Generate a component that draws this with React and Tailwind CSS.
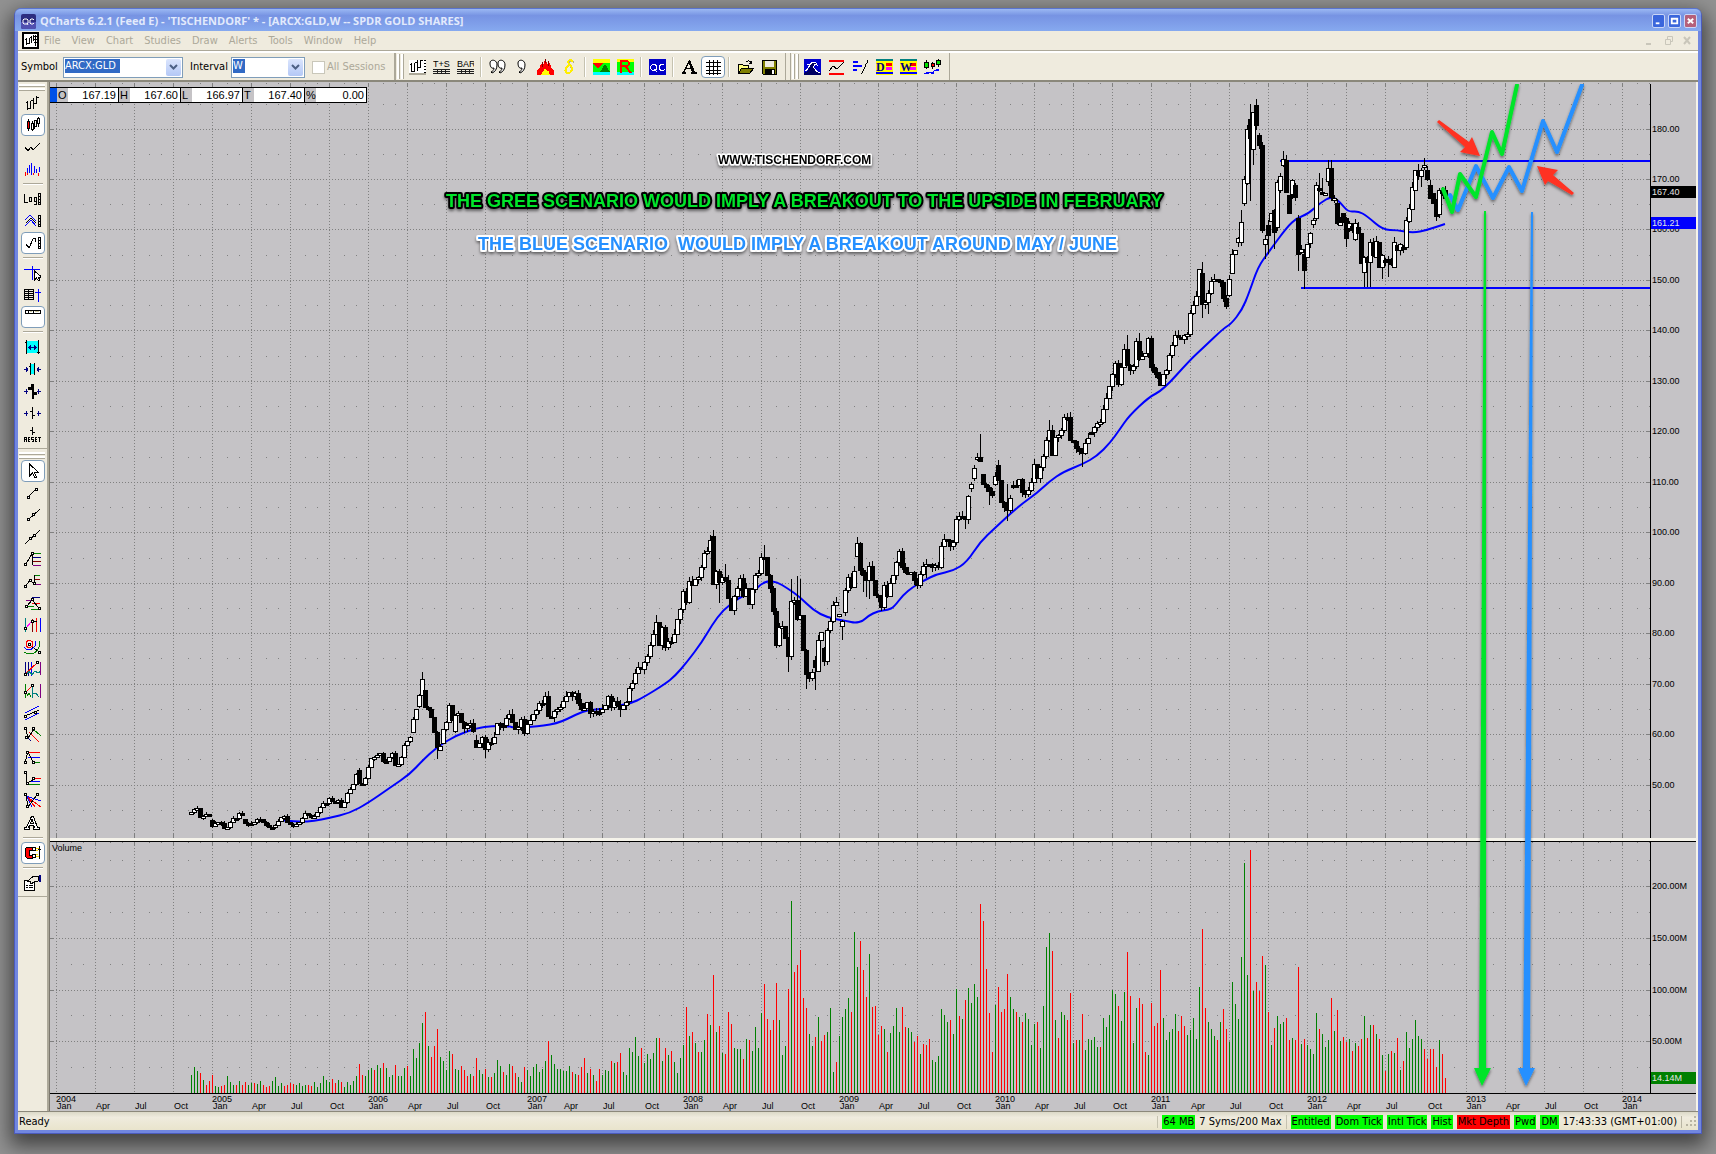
import { clsx } from 'clsx';

const GREEN = '#008000';
const RED = '#ff0000';
const NAVY = '#000080';
const BLUE = '#0000ff';
const TEAL = '#008080';
const PURPLE = '#800080';
const MAROON = '#800000';

// weekly closes as chart y; a pair is [open, close] where the week gapped
const CLOSES = [
  812, 809, 808, 817, 816, 814, 816, [820, 826], 823, 822, 823, 828, 827, 822, 818, 818, 813, 815, [819, 823], 823,
  823, 822, 819, 819, 822, 825, 827, 827, 825, 821, 817, 816, 822, 824, 825, 824, 822, 818, 813, 815,
  817, 816, 812, 807, 803, 803, 798, 801, 802, 800, 807, 802, 793, 789, 784, 774, [770, 783], 784, 778, 767,
  758, 757, 755, 753, 761, 761, 757, 753, 765, 764, 757, 745, 741, 737, [732, 719], 709, [706, 695], 679, [690, 707], 709,
  717, 732, 747, [750, 746], [743, 729], 722, 705, 720, [731, 715], 713, 722, 728, 725, 723, 731, [740, 747], 743, 737, 749, 742,
  743, 737, [734, 723], 725, 725, 718, 714, 722, 729, 727, 719, 733, 724, 720, 714, 710, 703, 703, 696, 716,
  717, 711, 709, 707, 701, 696, 692, 696, 693, 703, 709, 708, 702, 713, 711, 712, 712, 709, 705, 696,
  707, 701, 705, 709, 705, 702, [701, 688], 683, 673, 667, 669, 662, 656, 645,
  634, 622, 645, 627, 647, 641, 642, 634, 619, 609, 591, 602, 581, 585, 579, 577,
  567, 553, 551, 540, [536, 584], 571, 582, 577, 580, 598, 610, 596, 588, 578, 596, 588, 604, 589, 575, 573,
  557, 557, 575, 588, 611, 645, 627, 626, 638, 656, 601, 600, 619, 615, 650, 674, 678, 672, [660, 667], [671, 640],
  632, [648, 661], 630, 621, 605, 602, [615, 614], [626, 621], [612, 590], 577, 587, 571, [556, 543], 570, 575, 580, 566, 580, 595, 597,
  607, 585, 596, 583, 575, 562, 551, 567, 572, 573, 572, 580, 585, 574, 566, 564, 564, 567, 565, 567,
  546, 539, 540, 546, 542, 519, 516, 516, 519, 496, [488, 484], [478, 468], [458, 457], 461, [474, 484], 487, 491, 495, [484, 476], [465, 480],
  502, 507, 510, 498, [485, 485], 485, 479, 492, 494, 490, 482, 464, 478, 467, 456, 440, 430, 455, 437, 435,
  430, 417, 417, 440, 441, 448, 451, 453, 443, 438, [432, 432], 427, 423, 422, 409, 398, 386, 374,
  363, 384, 367, 349, 365, 370, 366, 341, 359, 356, 353, 338, 367, 372, 377, 385, 374, 370, 355, 345,
  335, 337, 339, 335, 334, 313, 305, 296, 269,
  [273, 304], 302, 293, 281, 279, 280, 282, 298, 306, [295, 279], [273, 254], 250, [242, 238], [242, 222],
  [203, 179], [183, 129], [119, 138], [149, 112], [105, 125], [135, 145], [145, 230], [244, 239], [225, 235], [221, 213],
  [210, 232], [227, 182], [190, 176], [165, 159], [160, 192], [195, 213], [194, 180], [185, 197], [218, 254], [252, 249],
  [254, 270], [257, 244], [243, 233], [224, 220], [218, 185], [188, 190], [192, 194], [194, 193], [181, 168], [168, 197],
  [200, 198], [203, 223], [225, 222], [213, 222], [218, 238], [228, 223], [226, 230], [239, 223], [227, 233], [233, 263],
  [272, 257], [258, 262], [262, 242], [242, 255], [257, 241], [242, 267], [267, 255], [260, 261], [259, 260], [262, 264],
  [267, 242], [245, 250], [250, 244], [247, 248], [247, 220], [221, 208], [209, 187], [190, 170], [170, 175], [176, 170],
  [166, 165], [170, 179], [185, 198], [193, 203], [200, 216], [214, 190], [190, 193], [190, 198],
];

// long shadows, [high, low] by week
const WICKS = {
  77: [672], 82: [0, 759], 98: [0, 758], 143: [0, 717], 155: [615], 174: [530], 176: [0, 603], 178: [564], 191: [545],
  199: [0, 672], 200: [579], 202: [576], 203: [579], 205: [0, 689], 208: [0, 690], 217: [0, 640], 222: [537],
  224: [0, 592], 225: [0, 597], 226: [0, 599], 245: [0, 578], 258: [0, 529], 263: [434], 266: [0, 505], 272: [484, 521],
  286: [420], 297: [0, 467], 312: [335], 316: [333], 337: [262, 318], 338: [0, 309], 339: [0, 314], 350: [210],
  352: [0, 185], 353: [104, 201], 354: [0, 165], 355: [99], 358: [0, 259], 359: [0, 254], 361: [0, 249], 364: [151],
  369: [0, 271], 371: [0, 289], 376: [173], 377: [178], 379: [160], 380: [160], 385: [0, 247], 391: [0, 287],
  392: [0, 287], 393: [0, 287], 397: [0, 279], 399: [0, 277], 409: [164], 410: [0, 187], 411: [158],
};

// weekly volume in pixels, negative for a down week
const VOLUMES = [
  18, 26, 22, -20, 13, -8, -12, -18, 7, 6, -7, -8, 17, 11, 8, -8, 12, -8, -11, 8, 10, -10, 9, 12, -8, -6, -7, 12, 16, 7,
  10, -7, -8, -10, -9, 8, 10, 7, 8, -8, -7, 11, 6, 10, 17, 13, 11, -14, -10, 13, -11, 6, 11, 8, 12, 17, -29, -18, 17, 23,
  25, -23, 28, 25, -30, 25, 16, 18, -28, 17, 17, 25, -27, 17, 44, 35, 50, 70, -81, 47, -36, -47, -64, 36, 32, 23, 42, -39, 24, 23,
  -27, -23, -17, 19, -17, -35, 23, 19, -24, 16, -16, 20, 33, 27, -21, 18, 29, -27, -20, 16, 11, -26, 23, 17, 26, 29, 21, 24, 32, -52,
  38, 29, 24, 24, 22, 22, 27, -21, 19, -18, -26, -35, 20, -24, 18, -12, -24, 18, 23, 22, -32, 30, -31, -40, 21, 18, 45, 41, 56, 37,
  -45, 30, 39, 34, 40, 55, -55, 32, -45, 38, -42, 31, 20, 35, 48, -86, 57, -61, 50, -41, 41, 53, -79, 68, -118, 61, -67, 40, -39, -81,
  -69, 45, 44, 44, -34, 54, -53, 42, 66, 45, 80, -109, -74, -63, -73, -110, 73, 38, 47, -104, 192, -121, -128, -143, -95, -85, 59, 47, -56, 76,
  -52, -58, 61, 85, 21, -31, 57, 76, 84, 95, -81, 161, 126, -152, -123, -96, 139, -86, -87, -58, -67, 64, -41, 60, 67, 85, 61, -86, -66, 65,
  61, -51, -57, 39, -49, -48, -54, 33, 31, 37, 84, 78, 71, -73, 59, 104, -77, 74, -93, 105, 90, 109, 96, -189, -172, -124, -80, -41, 88, -106,
  -81, -84, -119, 96, 84, -81, 76, -71, 80, 74, 48, 69, -71, 45, 87, 146, 160, -142, 73, -55, 81, 78, -73, -100, 50, -53, 53, -79, 43, 54,
  53, 56, 46, -46, 75, 66, 78, 103, 99, -87, 72, 101, -141, -97, 50, 85, -95, -89, -41, 38, -90, -67, -70, -123, 75, 53, 61, 64, 79, -62,
  -77, -67, 58, 63, 75, 54, 106, -164, -85, 71, 64, 57, -53, 71, -84, -64, 51, 111, 89, 74, 136, 230, 118, -243, 102, -111, -102, -137, 128, -81,
  48, -65, 77, 69, 71, -75, -53, 55, -53, -126, 49, -54, 48, 44, 39, 80, -64, 59, 46, 53, -95, 62, -83, 52, -56, -51, 54, -42, 50, -47,
  -54, 77, -55, 68, -68, 59, -54, 38, -22, 39, -42, 40, -55, 23, -32, 61, 45, 54, 73, 57, 54, -44, -34, -44, -44, -26, 53, -39, -15,
];

const AVERAGE = [
  [280, 820], [300, 822], [314, 821], [329, 818], [350, 813], [368, 803], [391, 787], [410, 774], [422, 761], [437, 747],
  [457, 735], [477, 728], [492, 726], [508, 726], [515, 728], [530, 727], [557, 724], [577, 714], [588, 710], [603, 709],
  [613, 706], [630, 704], [644, 697], [665, 684], [675, 676], [687, 662], [702, 642], [712, 625], [723, 610], [740, 597],
  [753, 592], [761, 584], [768, 581], [777, 582], [787, 588], [800, 597], [813, 610], [828, 618], [847, 621], [855, 623],
  [863, 621], [868, 616], [878, 611], [888, 610], [894, 607], [903, 595], [913, 587], [923, 581], [937, 574], [953, 571],
  [967, 562], [980, 542], [995, 528], [1010, 514], [1023, 503], [1037, 493], [1050, 481], [1063, 472], [1083, 464], [1097, 456],
  [1110, 443], [1120, 429], [1129, 416], [1149, 397], [1163, 390], [1190, 360], [1204, 347], [1224, 328], [1231, 324], [1242, 310],
  [1249, 293], [1258, 267], [1268, 253], [1287, 227], [1297, 218], [1308, 214], [1320, 203], [1332, 196], [1340, 202], [1348, 212],
  [1358, 211], [1367, 216], [1383, 230], [1397, 230], [1413, 233], [1427, 230], [1445, 224],
];

// rounds the corners by running each curve between segment midpoints
const smooth = (points) => {
  const [first, ...rest] = points;
  let d = `M${first[0]} ${first[1]}`;
  rest.slice(0, -1).forEach(([x, y], i) => {
    const [nx, ny] = rest[i + 1];
    d += `Q${x} ${y} ${(x + nx) / 2} ${(y + ny) / 2}`;
  });
  const [lx, ly] = points[points.length - 1];
  return `${d}L${lx} ${ly}`;
};

const QUARTERS = [
  56, 95, 134, 173, 212, 251, 290, 329, 368, 407, 446, 485, 527, 563, 602, 644, 683, 722, 761, 800, 839, 878, 917, 956,
  995, 1034, 1073, 1112, 1151, 1190, 1229, 1268, 1307, 1346, 1385, 1427, 1466, 1505, 1544, 1583, 1622,
];
const MONTHS = ['Jan', 'Apr', 'Jul', 'Oct'];

const PRICE_ROWS = [129, 179, 229, 280, 330, 381, 431, 482, 532, 583, 633, 684, 734, 785];
const PRICES = PRICE_ROWS.map((y, i) => ({ price: 180 - i * 10, y }));
const VOLUME_LEVELS = [
  { label: '200.00M', y: 886 },
  { label: '150.00M', y: 938 },
  { label: '100.00M', y: 990 },
  { label: '50.00M', y: 1041 },
];

const weekX = (i) => 191 + i * 3;

const Grid = () => {
  const rows = [...PRICES.map((p) => p.y), ...VOLUME_LEVELS.map((v) => v.y)];
  const minorRows = [104, 154, 204, 255, 305, 356, 406, 457, 507, 558, 608, 658, 709, 759, 810, 860, 912, 964, 1015, 1067];
  return (
    <g stroke="#808080" shapeRendering="crispEdges">
      {QUARTERS.map((x) => (
        <g key={x}>
          <path d={`M${x + 0.5} 83V838M${x + 0.5} 842V1093`} strokeDasharray="1 2" />
          <path d={`M${x + 0.5} 83v4M${x + 0.5} 834v4M${x + 0.5} 842v3M${x + 15.5} 83v1M${x + 27.5} 83v1M${x + 15.5} 842v1M${x + 27.5} 842v1`} />
        </g>
      ))}
      {rows.map((y) => (
        <path key={y} d={`M56 ${y + 0.5}H1650`} strokeDasharray="1 2" />
      ))}
      {rows.map((y) => (
        <path key={y} d={`M50 ${y + 0.5}h4M1647 ${y + 0.5}h3`} />
      ))}
      {minorRows.map((y) => (
        <path key={y} d={QUARTERS.map((x) => `M${x + 15} ${y + 0.5}h1M${x + 27} ${y + 0.5}h1`).join('')} />
      ))}
    </g>
  );
};

const Candles = () => {
  let last = 814;
  return (
    <g shapeRendering="crispEdges">
      {CLOSES.map((entry, i) => {
        const [open, close] = Array.isArray(entry) ? entry : [last, entry];
        last = close;
        const x = weekX(i);
        const top = Math.min(open, close);
        const height = Math.max(Math.abs(open - close), 2);
        const reach = i < 90 ? 3 : 6;
        const [high, low] = WICKS[i] || [];
        const y1 = high || top - ((i * 7) % reach);
        const y2 = low || top + height + ((i * 11) % reach);
        const up = close < open;
        return (
          <g key={i}>
            <rect x={x} y={y1} width="1" height={y2 - y1} />
            <rect x={x - 2} y={top} width="5" height={height + 1} />
            {up && height > 1 && <rect x={x - 1} y={top + 1} width="3" height={height - 1} fill="#fff" />}
          </g>
        );
      })}
    </g>
  );
};

const Chart = () => (
  <svg viewBox="49 82 1649 1029" className="block h-auto w-full bg-[#c5c3c6] font-['Liberation_Sans',Arial,sans-serif] text-[9px]" role="img" aria-label="SPDR Gold Shares weekly chart">
    <defs>
      <filter id="drop" x="-20%" y="-20%" width="140%" height="160%">
        <feDropShadow dx="0" dy="2" stdDeviation="1.5" floodOpacity="0.5" />
      </filter>
      <clipPath id="plot">
        <rect x="49" y="84" width="1649" height="1027" />
      </clipPath>
    </defs>
    <Grid />
    <path d={smooth(AVERAGE)} fill="none" stroke={BLUE} strokeWidth="2" />
    <path d="M1280 161H1650M1301 288H1650" stroke={BLUE} strokeWidth="2" shapeRendering="crispEdges" />
    <Candles />
    <g shapeRendering="crispEdges">
      {VOLUMES.map((v, i) => (
        <rect key={i} x={weekX(i)} y={1093 - Math.abs(v)} width="1" height={Math.abs(v)} fill={v < 0 ? RED : GREEN} />
      ))}
      <rect x="49" y="838" width="1649" height="3" fill="#f5f3ea" />
      <rect x="49" y="841" width="1649" height="1" />
      <rect x="49" y="1093" width="1649" height="1" />
      <rect x="1650" y="84" width="1" height="754" />
      <rect x="1650" y="841" width="1" height="252" />
      <rect x="49" y="82" width="1" height="1029" fill="#7b776c" />
      <rect x="1696" y="82" width="2" height="1029" fill="#f5f3ea" />
    </g>
    {PRICES.map((p) => (
      <text key={p.price} x="1652" y={p.y + 3}>{p.price}.00</text>
    ))}
    {VOLUME_LEVELS.map((v) => (
      <text key={v.label} x="1652" y={v.y + 3}>{v.label}</text>
    ))}
    <g shapeRendering="crispEdges">
      <rect x="1651" y="186" width="45" height="12" />
      <rect x="1651" y="217" width="45" height="12" fill={BLUE} />
      <rect x="1651" y="1072" width="45" height="12" fill={GREEN} />
    </g>
    <g fill="#e4e4e4">
      <text x="1652" y="195">167.40</text>
      <text x="1652" y="226">161.21</text>
      <text x="1652" y="1081">14.14M</text>
    </g>
    <text x="52" y="851">Volume</text>
    {QUARTERS.map((x, i) => (
      <g key={x}>
        {i % 4 === 0 && <text x={x} y="1102">{2004 + i / 4}</text>}
        <text x={x + 1} y="1109">{MONTHS[i % 4]}</text>
      </g>
    ))}

    <g filter="url(#drop)" className="font-bold [paint-order:stroke]" strokeLinejoin="round">
      <text x="718" y="164" stroke="#fff" strokeWidth="3" className="text-[12px]">WWW.TISCHENDORF.COM</text>
      <text x="446" y="207" fill="#00e52b" stroke="#000" strokeWidth="4" className="text-[18px]">
        THE GREE SCENARIO WOULD IMPLY A BREAKOUT TO THE UPSIDE IN FEBRUARY
      </text>
      <text x="478" y="250" fill="#2590ff" stroke="#fff" strokeWidth="4" className="text-[18px] whitespace-pre">
        {'THE BLUE SCENARIO  WOULD IMPLY A BREAKOUT AROUND MAY / JUNE'}
      </text>
    </g>

    <g filter="url(#drop)" clipPath="url(#plot)">
      <path d="M1450 195L1458 210L1476 166L1493 198L1509 167L1522 191L1543 121L1557 152L1582 85" fill="none" stroke="#2590ff" strokeWidth="4" strokeLinecap="round" strokeLinejoin="round" />
      <path d="M1443 189L1452 212L1460 174L1476 197L1492 132L1502 154L1517 85" fill="none" stroke="#00e52b" strokeWidth="4" strokeLinecap="round" strokeLinejoin="round" />
      <path d="M1484 211L1486 211L1486 1068H1491L1482 1086L1474 1068H1479Z" fill="#00e52b" />
      <path d="M1531 212L1533 212L1530 1068H1535L1526 1086L1518 1068H1523Z" fill="#2590ff" />
      <path d="M1437 122L1439 120L1469 142L1472 137L1480 156L1460 152L1465 147Z" fill="#ff3020" />
      <path d="M1537 166L1558 170L1553 175L1574 193L1572 195L1548 181L1545 185Z" fill="#ff3020" />
    </g>
  </svg>
);

// line glyph with the small square handles used by the drawing tools
const Glyph = ({ lines = [], dots = [], children }) => (
  <svg viewBox="0 0 17 16" width="17" height="16" shapeRendering="crispEdges" fill="none" aria-hidden="true">
    {lines.map(([d, color = '#000'], i) => (
      <path key={i} d={d} stroke={color} />
    ))}
    {children}
    {dots.map(([x, y]) => (
      <rect key={`${x}-${y}`} x={x - 0.5} y={y - 0.5} width="2" height="2" fill="#fff" stroke="#000" />
    ))}
  </svg>
);

const RULER = 'M14.5 2v12M16.5 2v12M14 2.5h3M14 5.5h3M14 8.5h3M14 11.5h3M14 13.5h3';

const VIEW_TOOLS = [
  { name: 'Bars', icon: <Glyph lines={[['M3.5 6v9M1.5 7.5h2M6.5 6v8M4 13.5h2M9.5 3v11M7 5.5h2M12.5 1v8M10 8.5h2M12.5 2.5h2']]} /> },
  {
    name: 'Candles',
    on: true,
    icon: (
      <Glyph lines={[['M4.5 2v12M8.5 4v10M10.5 3v9M14.5 0v10']]}>
        <path d="M3.5 4.5h2v7h-2z" fill={RED} stroke="#000" />
        <path d="M7.5 6.5h2v6h-2zM10.5 3.5h2v6h-2zM13.5 1.5h2v5h-2z" fill="#fff" stroke="#000" />
      </Glyph>
    ),
  },
  { name: 'Line', icon: <Glyph lines={[['M1 8L4 12L7 8L9 11L16 4']]} /> },
  { name: 'Histogram', icon: <Glyph lines={[['M3.5 7v5M5.5 4v8M7.5 2v12M10.5 5v7M12.5 8v4M15.5 6v5', BLUE], ['M1.5 11v4M3.5 12v2M9.5 12v2M14.5 12v3', RED]]} /> },
  null,
  { name: 'Log scale', icon: <Glyph lines={[['M.5 3v8h3M5.5 6.5h2v4h-2zM12.5 6.5h-2v4h2M12.5 6v7h-3'], [RULER]]} /> },
  { name: 'Bands', icon: <Glyph lines={[['M1 7L6 2L12 8M1 13L7 7L12 13', BLUE], ['M2 10L7 5L12 10'], [RULER]]} /> },
  { name: 'Scale', on: true, icon: <Glyph lines={[['M2 9L5 13L9 4L11 3L12 7'], [RULER]]} /> },
  null,
  {
    name: 'Crosshair',
    icon: (
      <Glyph lines={[['M0 4.5h16M8.5 1v14', BLUE]]}>
        <path d="M10.5 6v9l2-2 2 3 1-1-1-3h3z" fill="#fff" stroke="#000" />
      </Glyph>
    ),
  },
  { name: 'Data table', icon: <Glyph lines={[['M0 2.5h10M0 4.5h10M0 6.5h10M0 8.5h10M0 10.5h10M0 12.5h10M.5 2v11M4.5 2v11M9.5 2v11'], ['M11 5.5h6M14.5 2v13', BLUE]]} /> },
  { name: 'Quote bar', on: true, icon: <Glyph lines={[['M1 1.5h16M1 4.5h16M1.5 1v4M4.5 1v4M9.5 1v4M16.5 1v4'], ['M6 2.5h2M11 2.5h4', '#ccc79c']]} /> },
  null,
  {
    name: 'Fit width',
    icon: (
      <Glyph>
        <path d="M2 2h12v12H2z" fill="#00ffff" />
        <path d="M2.5 1v14M1 3.5h1M14.5 1v14M13 13.5h3" stroke="#000" />
        <path d="M4 8.5h9M5.5 7v3M6.5 6v5M10.5 6v5M11.5 7v3" stroke={NAVY} />
      </Glyph>
    ),
  },
  {
    name: 'Squeeze',
    icon: (
      <Glyph lines={[['M0 8.5h4M2.5 6v5M3.5 7v3M13 8.5h4M14.5 6v5M13.5 7v3', NAVY]]}>
        <path d="M6 3h5v10H6z" fill="#00ffff" />
        <path d="M6.5 2v12M5 5.5h1M10.5 2v12" stroke="#000" />
      </Glyph>
    ),
  },
  {
    name: 'Wider bars',
    icon: (
      <Glyph lines={[['M0 8.5h4M2.5 6v5M13 8.5h4M14.5 6v5', NAVY]]}>
        <path d="M7 1h3v8h3v3h-3v4H8V7H4V4h3z" fill="#000" />
      </Glyph>
    ),
  },
  { name: 'Narrower bars', icon: <Glyph lines={[['M0 8.5h4M2.5 6v5M13 8.5h4M14.5 6v5', NAVY], ['M8.5 2v12M6 6.5h2M9 10.5h2']]} /> },
  {
    name: 'Reset',
    icon: (
      <Glyph lines={[['M8.5 0v8M6 3.5h2M9 5.5h2'], ['M.5 15v-5h2v2h-2M2.5 13v2M6 10.5h-2v4h2M4 12.5h2M9.5 10.5h-2v2h2v2h-2M13 10.5h-2v4h2M11 12.5h2M14 10.5h3M15.5 10v5']]} />
    ),
  },
];

const DRAW_TOOLS = [
  {
    name: 'Pointer',
    on: true,
    icon: (
      <Glyph>
        <path d="M5.5 1v12l3-3 2.5 5 1.5-1-2.5-5h4z" fill="#fff" stroke="#000" />
      </Glyph>
    ),
  },
  { name: 'Segment', icon: <Glyph lines={[['M4 12L12 4']]} dots={[[4, 12], [12, 4]]} /> },
  { name: 'Ray', icon: <Glyph lines={[['M4 13L16 2']]} dots={[[4, 12], [9, 7]]} /> },
  { name: 'Line', icon: <Glyph lines={[['M1 15L16 1']]} dots={[[6, 9], [10, 6]]} /> },
  { name: 'Fibonacci', icon: <Glyph lines={[['M9 2.5h8', GREEN], ['M9 6.5h8', NAVY], ['M9 10.5h8', MAROON], ['M9 14.5h8', PURPLE], ['M2 13L8 3V14']]} dots={[[1, 13], [8, 2]]} /> },
  { name: 'Extension', icon: <Glyph lines={[['M10 2.5h6', GREEN], ['M11 6.5h5', MAROON], ['M11 11.5h6', PURPLE], ['M1 14L6 7L10 11V2']]} dots={[[1, 13], [6, 7], [10, 10]]} /> },
  { name: 'Retracement', icon: <Glyph lines={[['M8 2.5h8', NAVY], ['M2 5.5h5', PURPLE], ['M8 8.5h8', RED], ['M3 11.5h7M7 14.5h8', GREEN], ['M3 11L8 5L15 13']]} dots={[[2, 11], [8, 4], [15, 13]]} /> },
  { name: 'Time zones', icon: <Glyph lines={[['M1.5 1v14', TEAL], ['M2 11L8 4', '#ff00ff'], ['M8.5 2v13', MAROON], ['M12.5 1v14', RED], ['M16.5 1v14', BLUE], ['M8 4.5h5']]} dots={[[1, 11], [8, 4]]} /> },
  {
    name: 'Arcs',
    icon: (
      <Glyph lines={[['M6 6L15 13']]} dots={[[5, 5], [15, 13]]}>
        <path d="M2 5a3.5 3.5 0 1 0 7 0 3.5 3.5 0 1 0-7 0" stroke={RED} />
        <path d="M0 8c3 5 12 3 12-6" stroke={BLUE} />
        <path d="M0 13c6 4 16 2 16-11" stroke={GREEN} />
      </Glyph>
    ),
  },
  { name: 'Cycles', icon: <Glyph lines={[['M1.5 1v14M4.5 1v14', NAVY], ['M7.5 1v14', BLUE], ['M3 13l2-3 3 4 3-4 3 2 3-2', TEAL], ['M16.5 1v13', PURPLE], ['M1 13L14 1', RED]]} dots={[[1, 13], [13, 1]]} /> },
  { name: 'Fib cycles', icon: <Glyph lines={[['M1.5 1v14M3 13l2-3 2 4', GREEN], ['M8.5 2v13M9 11l3-1 3 4', TEAL], ['M16.5 1v14', PURPLE], ['M2 9L9 2', RED]]} dots={[[1, 9], [8, 2]]} /> },
  { name: 'Channel', icon: <Glyph lines={[['M1 8L15 1M1 15L15 8', BLUE], ['M1 11L15 5']]} dots={[[1, 11], [11, 7]]} /> },
  { name: 'Pitchfork', icon: <Glyph lines={[['M3 10L7 14', NAVY], ['M5 5L15 15', RED], ['M9 2L17 9', GREEN], ['M2 2L4 11L10 2']]} dots={[[1, 1], [9, 1], [2, 10]]} /> },
  { name: 'Levels', icon: <Glyph lines={[['M4 3.5h12', RED], ['M4 8.5h12', BLUE], ['M9 13.5h7', GREEN], ['M1 13L4 3L9 13']]} dots={[[1, 13], [3, 3], [9, 13]]} /> },
  { name: 'Projection', icon: <Glyph lines={[['M10 7.5h7', RED], ['M6 10.5h10', BLUE], ['M4 13.5h12', GREEN], ['M2 1V13L10 8']]} dots={[[1, 1], [3, 12], [9, 7]]} /> },
  { name: 'Fan', icon: <Glyph lines={[['M2 3L17 14M2 2L11 14', RED], ['M2 3L17 8M2 2L8 14', BLUE], ['M2 2L4 14L13 2']]} dots={[[1, 1], [3, 13], [13, 1]]} /> },
  {
    name: 'Text',
    icon: (
      <Glyph>
        <path d="M7.5 1.5h2l4 11h2v2h-6v-2h1l-1-2h-4l-1 2h1v2h-5v-2h2zM6.5 8.5h3l-1.5-4z" fill="#fff" stroke="#000" />
      </Glyph>
    ),
  },
  null,
  {
    name: 'Magnet',
    on: true,
    icon: (
      <Glyph>
        <path d="M8 2H3L1 4v7l2 2h5v-3H5V5h3z" fill={RED} stroke="#000" />
        <path d="M8.5 2.5h3v3h-3zM8.5 9.5h3v3h-3z" fill="#fff" stroke="#000" />
        <path d="M12 3.5h3M12 11.5h3M12 5.5h2M12 9.5h2" stroke="#ffd800" />
        <path d="M15.5 1v13M14 4.5h3" stroke="#000" />
      </Glyph>
    ),
  },
  null,
  {
    name: 'Properties',
    icon: (
      <Glyph>
        <path d="M.5 5.5h10v10H.5z" fill="#fff" stroke="#000" />
        <path d="M2 10.5h2M5 10.5h4M2 12.5h2M5 12.5h4" stroke="#000" />
        <path d="M3 7l4-4 3-2h4v5l-4 1-3 2-1-3z" fill="#efebde" stroke="#000" />
        <path d="M15 0h2v7h-2z" fill={NAVY} />
      </Glyph>
    ),
  },
];

const Comma = ({ x }) => (
  <g shapeRendering="auto">
    <path d={`M${x} 4c0-4 7-4 7 2 0 4-2 7-5 8l-1-1c2-1 3-2 3-4-3 1-4-2-4-5z`} fill="#fff" stroke="#000" />
  </g>
);

const Tile = ({ letter }) => (
  <Glyph>
    <path d="M0 0h17v16H0z" fill="#ffff00" />
    <path d="M0 0h17v2H0z" fill={TEAL} />
    <path d="M0 13h17v2H0z" fill={BLUE} />
    <path d="M10 4h6v3h-6z" fill={RED} />
    <path d="M10 8h6v3h-6z" fill="#ff00ff" />
    <text x="0" y="12" fill="#000080" className="font-['Liberation_Serif',serif] text-[12px] font-bold">{letter}</text>
  </Glyph>
);

const GridText = ({ label }) => (
  <Glyph lines={[['M0 10.5h17M0 12.5h17M0 14.5h17M4.5 10v5M8.5 10v5M12.5 10v5', '#202020']]}>
    <text x="0" y="8" fill="#000" className="font-['Liberation_Sans',sans-serif] text-[9px]">{label}</text>
  </Glyph>
);

const MAIN_TOOLS = [
  {
    name: 'New chart',
    icon: (
      <Glyph>
        <path d="M0 1h17v13H0z" fill="#fff" />
        <path d="M0 14h17v2H0z" fill="#aca899" />
        <path d="M2.5 4v9M1 5.5h1M5.5 4v9M3 12.5h2M8.5 1v11M6 3.5h2M11.5 1v8M9 8.5h2M11.5 1.5h2" stroke="#000" />
        <path d="M15 1.5h2M15 4.5h2M15 7.5h2M15 10.5h2M15 13.5h2" stroke="#000" />
      </Glyph>
    ),
  },
  { name: 'Time and sales', icon: <GridText label="T+S" /> },
  { name: 'Bar data', icon: <GridText label="BAR" /> },
  null,
  {
    name: 'Quotes',
    icon: (
      <Glyph>
        <Comma x={1} />
        <Comma x={9} />
      </Glyph>
    ),
  },
  {
    name: 'Quote',
    icon: (
      <Glyph>
        <Comma x={5} />
      </Glyph>
    ),
  },
  {
    name: 'Hot list',
    icon: (
      <Glyph>
        <path d="M0 16v-4l3-4 1-4 2 3 2-7 3 6 2-3 1 6 3 3v4z" fill={RED} />
        <path d="M4 16l3-5 1-2 2 3 1-1 2 5z" fill="#ffff00" />
        <path d="M5.5 3v5M11.5 2v5M8.5 0v4" stroke={MAROON} />
      </Glyph>
    ),
  },
  {
    name: 'Options',
    icon: (
      <Glyph>
        <path d="M13 3c-5-3-7 0-4 3 4 4 1 8-2 8-4-1-3-6 2-8" stroke="#b0ac90" strokeWidth="2" />
        <path d="M12 2c-5-2-6 1-3 4 4 4 1 8-2 8-4-1-3-6 2-8" stroke="#ffee00" strokeWidth="2" />
      </Glyph>
    ),
  },
  null,
  {
    name: 'Market movers',
    icon: (
      <Glyph>
        <path d="M0 0h17v4H0z" fill="#ffff00" />
        <path d="M0 4h17v9H0z" fill="#00ff00" />
        <path d="M0 13h17v3H0z" fill="#00ffff" />
        <path d="M0 4h10L5 10z" fill={RED} />
        <path d="M7 13l5-8 5 8z" fill={GREEN} />
      </Glyph>
    ),
  },
  {
    name: 'Research',
    icon: (
      <Glyph>
        <path d="M0 0h17v13H0z" fill="#00ff00" />
        <path d="M0 0h17v3H0z" fill="#ffff00" />
        <path d="M0 13h17v3H0z" fill="#00ffff" />
        <path d="M4 14V2h5c4 0 4 5 0 5H5M9 8l5 6" stroke={RED} strokeWidth="2" />
      </Glyph>
    ),
  },
  null,
  {
    name: 'QCharts home',
    icon: (
      <Glyph>
        <path d="M0 0h17v16H0z" fill="#0000c8" />
        <path d="M6.5 5.5h-3l-2 2v2l2 2h3l1-2v-2zM5 10l3 3M15.5 6.5l-1-1h-3l-1 2v2l1 2h3l1-1" stroke="#fff" />
      </Glyph>
    ),
  },
  null,
  {
    name: 'Text size',
    icon: (
      <Glyph>
        <path d="M8 1h1l5 12h2v2h-6v-2h1l-1-3H5l-1 3h1v2H1v-2h1zM5.5 9h4L8 4z" fill="#000" fillRule="evenodd" />
      </Glyph>
    ),
  },
  { name: 'Toggle grid', on: true, icon: <Glyph lines={[['M4.5 1v15M8.5 1v15M12.5 1v15M1 3.5h15M1 7.5h15M1 11.5h15M1 14.5h15']]} /> },
  null,
  {
    name: 'Open',
    icon: (
      <Glyph>
        <path d="M1.5 14.5v-9h4l1 1h5v3" fill="#ffff80" stroke="#000" />
        <path d="M1.5 14.5l3-5h12l-4 5z" fill="#808000" stroke="#000" />
        <path d="M9 3c2-2 4-1 5 1M12 4.5h3M14.5 2v3" stroke="#000" />
      </Glyph>
    ),
  },
  {
    name: 'Save',
    icon: (
      <Glyph>
        <path d="M1.5 1.5h14v14h-13l-1-1z" fill="#808000" stroke="#000" />
        <path d="M4 2h9v6H4z" fill="#efebde" />
        <path d="M4 10h10v5H4z" fill="#000" />
        <path d="M11 11h2v4h-2z" fill="#fff" />
      </Glyph>
    ),
  },
];

const STUDY_TOOLS = [
  {
    name: 'Wave',
    icon: (
      <Glyph>
        <path d="M0 0h17v16H0z" fill="#0000d0" />
        <path d="M0 14c5-1 5-5 5-7 1-4 6-5 8-1-2-1-4 0-3 2s4 5 7 6v2H0z" fill="#000060" />
        <path d="M1 12c4-1 4-8 8-9 3 0 4 2 4 3-2-1-4 0-3 3 1 2 3 4 6 5M3 5h4" stroke="#fff" />
      </Glyph>
    ),
  },
  {
    name: 'Channel lines',
    icon: (
      <Glyph>
        <path d="M1 2h15M1 15h15" stroke={RED} strokeWidth="2" />
        <path d="M1 12L5 7L9 10L16 3" stroke="#000" />
      </Glyph>
    ),
  },
  {
    name: 'Market profile',
    icon: (
      <Glyph>
        <path d="M1 3h5M1 7h9M1 11h4" stroke={BLUE} strokeWidth="2" />
        <path d="M9 15c3-2 2-5 4-7 0-3 3-4 3-7" stroke="#000" />
      </Glyph>
    ),
  },
  { name: 'Daily', icon: <Tile letter="D" /> },
  { name: 'Weekly', icon: <Tile letter="W" /> },
  {
    name: 'Candle study',
    icon: (
      <Glyph>
        <path d="M2.5 1v9M8.5 3v7M14.5 0v8" stroke="#000" />
        <path d="M.5 3.5h4v5h-4zM12.5 1.5h4v4h-4z" fill="#00e000" stroke="#000" />
        <path d="M7.5 4.5h3v3h-3z" fill={RED} stroke="#000" />
        <path d="M0 15l4-2 4 1 4-3 4-1" stroke={BLUE} strokeDasharray="2 1" />
        <path d="M2 13h3v2H2zM7 13h3v2H7zM12 10h3v2h-3z" fill={BLUE} />
      </Glyph>
    ),
  },
];

const ToolButton = ({ tool }) => (
  <button
    type="button"
    title={tool.name}
    aria-label={tool.name}
    className={clsx('flex h-[22px] w-6 items-center justify-center', tool.on && 'rounded-sm border border-[#7f9db9] bg-white')}
  >
    {tool.icon}
  </button>
);

const ToolStrip = ({ tools }) => (
  <div className="flex items-center">
    {tools.map((tool, i) =>
      tool ? <ToolButton key={tool.name} tool={tool} /> : <span key={i} className="mx-[3px] h-5 w-[2px] border-l border-[#c5c2b0] bg-white" />
    )}
  </div>
);

const SideStrip = ({ tools }) => (
  <div className="flex flex-col items-center border-b border-[#aca899] pb-[2px]">
    <div className="mb-px flex w-full flex-col gap-px pr-[2px] pl-px">
      <span className="h-[3px] border-b border-[#aca899] bg-white" />
      <span className="h-[3px] border-b border-[#aca899] bg-white" />
    </div>
    {tools.map((tool, i) =>
      tool ? <ToolButton key={tool.name} tool={tool} /> : <span key={i} className="my-[3px] h-[2px] w-5 border-b border-white bg-[#aca899]" />
    )}
  </div>
);

const Grip = () => (
  <span className="mr-px flex h-[25px] gap-px">
    <span className="w-[3px] border-r border-[#aca899] bg-white" />
    <span className="w-[3px] border-r border-[#aca899] bg-white" />
  </span>
);

const Combo = ({ id, value, boxClass, textClass }) => (
  <div className={clsx('flex h-[21px] items-start border border-[#7f9db9] bg-white p-px', boxClass)}>
    <select id={id} defaultValue={value} className={clsx('h-[14px] appearance-none bg-[#316ac5] leading-[14px] text-white', textClass)}>
      <option>{value}</option>
    </select>
    <span className="pointer-events-none ml-auto flex h-[17px] w-[15px] items-center justify-center rounded-xs bg-linear-to-b from-[#dbe5fd] to-[#b4c8f6]">
      <svg viewBox="0 0 9 6" width="9" height="6" aria-hidden="true">
        <path d="M1 1l3.5 3.5L8 1" fill="none" stroke="#4d6185" strokeWidth="2" />
      </svg>
    </span>
  </div>
);

const TitleBar = () => (
  <header className="flex h-[23px] items-center rounded-t-md border-t border-[#5a74cf] bg-linear-to-b from-[#9bb8f3] via-[#7793e3] via-30% to-[#86a9ef] px-[2px] pt-[2px]">
    <svg viewBox="0 0 15 15" width="15" height="15" className="ml-1" aria-hidden="true">
      <rect width="15" height="15" rx="2" fill="#2c2c80" />
      <path d="M0 8h15v5a2 2 0 0 1-2 2H2a2 2 0 0 1-2-2z" fill="#5050b0" />
      <path d="M6 5H3L2 6v3l1 1h3l1-1V6L6 5zM6 9l1 2M13 6l-1-1h-2L9 6v3l1 1h2l1-1" fill="none" stroke="#fff" />
    </svg>
    <h1 className="ml-1 font-['Open_Sans',sans-serif] text-[11px] font-bold text-[#e2eafc]">QCharts 6.2.1 (Feed E) - &apos;TISCHENDORF&apos; * - [ARCX:GLD,W -- SPDR GOLD SHARES]</h1>
    <div className="mr-[2px] ml-auto flex gap-[3px]">
      {[
        { name: 'Minimize', d: 'M3 9h4', color: 'bg-[#3a66dc]' },
        { name: 'Maximize', d: 'M3 4h6v5H3z', color: 'bg-[#3a66dc]' },
        { name: 'Close', d: 'M3 4l6 5M9 4l-6 5', color: 'bg-[#b5607a]' },
      ].map((b) => (
        <button key={b.name} type="button" aria-label={b.name} className={clsx('h-[14px] w-[13px] rounded-xs border border-[#c9d6f7]', b.color)}>
          <svg viewBox="0 0 12 13" className="size-full" fill="none" stroke="#fff" strokeWidth="2" aria-hidden="true">
            <path d={b.d} />
          </svg>
        </button>
      ))}
    </div>
  </header>
);

const MENUS = ['File', 'View', 'Chart', 'Studies', 'Draw', 'Alerts', 'Tools', 'Window', 'Help'];

const MenuBar = () => (
  <nav className="flex h-[22px] items-start border-b-2 border-white bg-[#efebde] text-[#aca899] shadow-[inset_0_-1px_0_#aca899]">
    <svg viewBox="0 0 17 17" width="17" height="17" className="mt-px ml-1" shapeRendering="crispEdges" aria-hidden="true">
      <rect x="1" y="1" width="15" height="15" fill="#fff" stroke="#000" strokeWidth="2" />
      <path d="M4.5 6v7M3 7.5h1M7.5 6v6M5 11.5h2M9.5 4v7M8 5.5h1M11.5 3v6M13.5 3v11M12 4.5h3M12 7.5h3M12 10.5h3" fill="none" stroke="#000" />
    </svg>
    <ul className="mt-px ml-[5px] flex gap-[11px] leading-[18px]">
      {MENUS.map((m) => (
        <li key={m}>
          <button type="button">{m}</button>
        </li>
      ))}
    </ul>
    <div className="mt-1 mr-[3px] ml-auto flex gap-[7px]">
      {['M1 9h5', 'M3.5 4v-2.5h5v5H7M1.5 4.5h5v5h-5z', 'M1 2l6 7M7 2L1 9'].map((d, i) => (
        <button key={d} type="button" aria-label={['Minimize chart', 'Restore chart', 'Close chart'][i]}>
          <svg viewBox="0 0 12 12" width="12" height="12" fill="none" stroke="#c9c6ba" strokeWidth={i === 1 ? 1 : 2} aria-hidden="true">
            <path d={d} />
          </svg>
        </button>
      ))}
    </div>
  </nav>
);

const Toolbar = () => (
  <div className="flex h-[29px] items-center border-b-2 border-[#8b887b] bg-[#efebde] text-black">
    <div className="flex h-full w-[378px] shrink-0 items-center border-r-2 border-[#aca899] pt-px pl-[3px]">
      <label htmlFor="symbol" className="w-[42px]">Symbol</label>
      <Combo id="symbol" value="ARCX:GLD" boxClass="w-[120px]" textClass="w-[55px]" />
      <label htmlFor="interval" className="ml-[7px] w-[41px]">Interval</label>
      <Combo id="interval" value="W" boxClass="w-[74px]" textClass="w-3" />
      <input id="sessions" type="checkbox" disabled className="ml-[7px] size-[13px] appearance-none border border-[#c9c7ba] bg-white" />
      <label htmlFor="sessions" className="ml-[2px] text-[#aca899]">All Sessions</label>
    </div>
    <div className="flex h-full shrink-0 items-center border-r border-[#aca899] pr-1 pl-px">
      <Grip />
      <ToolStrip tools={MAIN_TOOLS} />
    </div>
    <div className="ml-1 flex h-full shrink-0 items-center border-x border-[#aca899] pr-[5px] pl-px">
      <Grip />
      <ToolStrip tools={STUDY_TOOLS} />
    </div>
  </div>
);

const QUOTES = [
  ['O', '167.19'],
  ['H', '167.60'],
  ['L', '166.97'],
  ['T', '167.40'],
  ['%', '0.00'],
];

const QuoteBar = () => (
  <dl className="absolute top-[5px] left-px flex h-4 border-y border-r border-black bg-white font-['Liberation_Sans',Arial,sans-serif] text-[11px] leading-[14px]">
    <span className="w-[7px] bg-[#0050e8]" />
    {QUOTES.map(([label, value]) => (
      <div key={label} className="flex border-l border-black first-of-type:border-l-0">
        <dt className="w-[11px] bg-[#c5c3c6] px-px">{label}</dt>
        <dd className="w-[50px] pr-[2px] text-right">{value}</dd>
      </div>
    ))}
  </dl>
);

const FEEDS = ['Entitled', 'Dom Tick', 'Intl Tick', 'Hist', 'Mkt Depth', 'Pwd', 'DM'];

const StatusBar = () => (
  <footer className="flex h-[19px] items-center border-t border-[#8b887b] bg-linear-to-b from-[#dcd9c8] via-[#efebde] via-30% to-[#e9e4cc] px-px pt-[2px] leading-[14px] text-black">
    <span>Ready</span>
    <div className="ml-auto flex items-center gap-1">
      <span className="h-3 w-px bg-[#c5c2b0]" />
      <span className="bg-[#00ff00] px-px">64 MB</span>
      <span>7 Syms/200 Max</span>
      <div className="flex items-center gap-1 border-l border-[#c5c2b0] pl-1">
        {FEEDS.map((f) => (
          <span key={f} className={clsx('px-px', f === 'Mkt Depth' ? 'bg-[#ff0000]' : 'bg-[#00ff00]')}>{f}</span>
        ))}
      </div>
      <span>17:43:33 (GMT+01:00)</span>
      <svg viewBox="0 0 16 12" width="16" height="12" fill="#b8b4a2" aria-hidden="true">
        <path d="M0 0h1v12H0zM13 0h2v2h-2zM9 4h2v2H9zM13 4h2v2h-2zM5 8h2v2H5zM9 8h2v2H9zM13 8h2v2h-2z" />
      </svg>
    </div>
  </footer>
);

export default function App() {
  return (
    <div className="min-h-screen bg-[#929292] px-[14px] pt-2 pb-5 font-['DejaVu_Sans_Condensed','DejaVu_Sans',sans-serif] text-[11px]">
      <div className="rounded-t-lg border-x border-b border-[#4c5bbd] bg-[#7187e0] shadow-[0_8px_20px_4px_rgba(0,0,0,0.55)]">
        <TitleBar />
        <div className="mx-[3px] pb-[3px]">
          <MenuBar />
          <Toolbar />
          <main className="flex">
            <aside className="flex w-[31px] shrink-0 flex-col gap-[3px] border-r-2 border-[#aca899] bg-[#efebde] pt-[2px]">
              <SideStrip tools={VIEW_TOOLS} />
              <SideStrip tools={DRAW_TOOLS} />
            </aside>
            <section className="relative min-w-0 flex-1">
              <Chart />
              <QuoteBar />
            </section>
          </main>
          <StatusBar />
        </div>
      </div>
    </div>
  );
}
